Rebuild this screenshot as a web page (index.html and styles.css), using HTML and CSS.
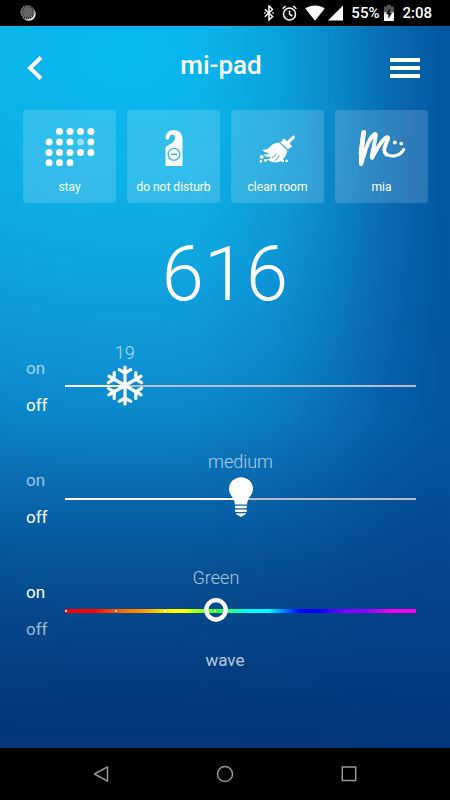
FILE: index.html
```html
<!DOCTYPE html>
<html lang="en">
<head>
<meta charset="utf-8">
<meta name="viewport" content="width=device-width, initial-scale=1">
<title>mi-pad</title>
<link rel="stylesheet" href="styles.css">
</head>
<body>
<div class="statusbar">
  <svg class="sync" width="16" height="16" viewBox="0 0 16 16"><circle cx="8.700" cy="8.700" r="7" fill="#fff"/><circle cx="7.400" cy="7.300" r="7.200" fill="#222"/><circle cx="7.400" cy="7.300" r="6.200" fill="none" stroke="#aaa" stroke-width="1.600" stroke-dasharray="1 1.200"/><circle cx="7.400" cy="7.300" r="5.300" fill="#666"/></svg>
  <svg width="10" height="16" viewBox="0 0 10 16" fill="none" stroke="#fff" stroke-width="1.500"><path d="M.8 4.300 8.600 11.500 5 15V1l3.600 3.500L.8 11.700"/><path d="M.2 8h1.500M8.300 8h1.500" stroke-width="1.700"/></svg>
  <svg width="15" height="16" viewBox="0 0 15 16" fill="none" stroke="#fff" stroke-width="1.500"><circle cx="7.500" cy="9" r="6"/><path d="M7.500 5.500V9.300l2.800 1.700M.6 3.700 3.800 1M14.400 3.700 11.200 1"/></svg>
  <span class="signals">
    <svg width="20" height="16" viewBox="0 0 20 16"><path d="M10 15.700.3 3.600C6-.7 14-.7 19.700 3.600z" fill="#fff"/></svg>
    <svg width="15" height="16" viewBox="0 0 15 16"><path d="M15 .5V15.500H0z" fill="#fff"/></svg>
  </span>
  <span class="battery">55%
    <svg width="10" height="16" viewBox="0 0 10 16"><path d="M3 0h4v1.500h3V16H0V1.500h3z" fill="#555"/><path d="M0 7.500h10V16H0z" fill="#fff"/><path d="M5.700 3.300 2 9.300h2.400v4.500L8 7.700H5.700z" fill="#000"/></svg>
  </span>
  <time>2:08</time>
</div>

<main class="app">
  <header class="header">
    <button class="back" aria-label="Back"><svg width="16" height="24" viewBox="0 0 16 24"><path d="M14 1.500 3 12l11 10.500" fill="none" stroke="#fff" stroke-width="4"/></svg></button>
    <h1>mi-pad</h1>
    <button class="menu" aria-label="Menu"><svg width="30" height="20" viewBox="0 0 30 20"><path d="M0 0h30v4H0zM0 8h30v4H0zM0 16h30v4H0z" fill="#fff"/></svg></button>
  </header>

  <nav class="tiles">
    <button class="tile">
      <svg width="50" height="40" viewBox="0 0 50 40" fill="#fff"><circle cx="14.500" cy="4.500" r="3.500"/><circle cx="25" cy="4.500" r="3.500"/><circle cx="35.500" cy="4.500" r="3.500"/><circle cx="45.900" cy="4.500" r="3.500"/><circle cx="4.100" cy="15" r="3.500"/><circle cx="14.500" cy="15" r="3.500"/><circle cx="25" cy="15" r="3.500"/><circle cx="35.500" cy="15" r="3.500" opacity=".5"/><circle cx="45.900" cy="15" r="3.500"/><circle cx="4.100" cy="25.400" r="3.500"/><circle cx="14.500" cy="25.400" r="3.500"/><circle cx="25" cy="25.400" r="3.500"/><circle cx="35.500" cy="25.400" r="3.500"/><circle cx="45.900" cy="25.400" r="3.500"/><circle cx="4.100" cy="35.800" r="3.500"/><circle cx="14.500" cy="35.800" r="3.500"/><circle cx="25" cy="35.800" r="3.500"/></svg>
      <span>stay</span>
    </button>
    <button class="tile">
      <svg width="50" height="40" viewBox="0 0 50 40"><path d="M16.500 39V21.500C16.500 17.500 26 17 26 10.700 26 6.600 20.600 6.500 20.300 10.800A1.900 1.900 0 0 1 16.500 10.800C16.500 6.300 20 2.900 24.700 2.900 30 2.900 33.500 6.500 33.500 11.700V39z" fill="#fff"/><g fill="none" stroke="#2ab5ea" stroke-width="1.300"><circle cx="25" cy="27.300" r="5.900"/><path d="M22 27.300h6" stroke-width="1.500"/></g></svg>
      <span>do not disturb</span>
    </button>
    <button class="tile">
      <svg width="50" height="40" viewBox="0 0 50 40" fill="#fff"><path d="M39.500 8.900 34 14.300l-2.500-2.300c-1.300-.9-2.300.1-1.800 1.600l-2.500 1.600 8 7.400 1.700-2c1.600.5 2.700-.6 1.600-2l-2.100-2.200 5.300-5.300c1.300-1.500-.7-3.500-2.200-2.200z"/><path d="M26.200 15.800 34.400 23.500C33.500 28 31 33.500 24.500 35.200 20.500 35.900 17 34.500 13.800 32.300 16.500 32 17.800 31 18.500 30 14.500 30.900 11.700 29.300 10.700 27.500 13.500 27.800 15.500 27 17 26 13.500 26 10.800 25 9.300 22.800 14.500 23 16 20.500 18.600 18.200 20.500 16.600 22.800 15.600 26.200 15.800z"/><g fill="none" stroke="#2599d6" stroke-width=".9"><path d="M26 28.500c-1 3-3 4.500-4.500 5.300M23.500 26.500c-1 2-2.500 3.300-4.500 4"/></g><circle cx="8.700" cy="30" r="1.900"/><circle cx="8" cy="34.300" r="1.200"/><circle cx="12.500" cy="33.300" r="1.500"/><circle cx="29.500" cy="33.700" r="1.500"/><circle cx="33.700" cy="33.700" r="1.300"/></svg>
      <span>clean room</span>
    </button>
    <button class="tile">
      <svg width="50" height="40" viewBox="0 0 50 40"><g fill="none" stroke="#fff" stroke-linecap="round" stroke-linejoin="round"><path d="M6.800 5.500C5 15 3.300 26 4 37.200 6.500 33 9 13 17.500 7.200 18.800 6.500 19 8 18.600 10L14.700 29.500" stroke-width="3.900"/><path d="M6.700 5.500 4 26" stroke-width="4.800"/><path d="M15 30.500C19 24 24 13 29.500 10.300 32 9.300 31.500 12.500 29.300 16 27 20.500 26.500 25 29.500 27.500" stroke-width="3.900"/><path d="M15 30.500 18 22" stroke-width="4.200"/><path d="M29 27C35.500 31 43.500 28.500 46.700 22.500" stroke-width="3"/></g><circle cx="37.800" cy="15.500" r="2" fill="#fff"/><circle cx="44.200" cy="16.600" r="1.900" fill="#fff"/></svg>
      <span>mia</span>
    </button>
  </nav>

  <p class="room">616</p>

  <section class="controls">
    <div class="control temperature">
      <div class="switch"><button>on</button><button class="active">off</button></div>
      <div class="slider">
        <output for="temp">19</output>
        <input id="temp" type="range" min="16" max="34" value="19" aria-label="Temperature">
        <svg class="thumb" width="44" height="44" viewBox="0 0 44 44"><defs><path id="arm" d="M22 20.500V2M22 8 16.200 4.700M22 8 27.800 4.700"/></defs><g fill="none" stroke="#fff" stroke-width="3.200" stroke-linecap="round"><use href="#arm"/><use href="#arm" transform="rotate(60 22 20.500)"/><use href="#arm" transform="rotate(120 22 20.500)"/><use href="#arm" transform="rotate(180 22 20.500)"/><use href="#arm" transform="rotate(240 22 20.500)"/><use href="#arm" transform="rotate(300 22 20.500)"/></g></svg>
      </div>
    </div>
    <div class="control brightness">
      <div class="switch"><button>on</button><button class="active">off</button></div>
      <div class="slider">
        <output for="light">medium</output>
        <input id="light" type="range" min="0" max="2" value="1" aria-label="Light">
        <svg class="thumb" width="44" height="44" viewBox="0 0 44 44" fill="#fff"><path d="M22 .3C28.700.3 34 5.300 34 11.800 34 19 28.300 20 28.100 27.500H15.900C15.700 20 10 19 10 11.800 10 5.300 15.300.3 22 .3z"/><rect x="16" y="28.700" width="12" height="2.600" rx="1.200"/><rect x="16" y="32.500" width="12" height="2.600" rx="1.200"/><path d="M17 36.200h10c-.3 1.500-1.800 1.600-2.600 2.400-1.200 1.500-3.600 1.500-4.800 0-.8-.8-2.300-.9-2.600-2.400z"/></svg>
      </div>
    </div>
    <div class="control colour">
      <div class="switch"><button class="active">on</button><button>off</button></div>
      <div class="slider">
        <output for="hue">Green</output>
        <input id="hue" type="range" min="0" max="7" value="3" aria-label="Colour">
        <div class="stops"><i></i><i></i><i></i><i></i></div>
        <svg class="thumb" width="44" height="44" viewBox="0 0 44 44"><circle cx="22" cy="20.800" r="9.700" fill="none" stroke="#fff" stroke-width="4.400"/></svg>
      </div>
    </div>
  </section>
  <button class="wave">wave</button>
</main>

<nav class="navbar">
  <button aria-label="Back"><svg width="18" height="18" viewBox="0 0 18 18"><path d="M15.500 1.800v14.400L2.500 9z"/></svg></button>
  <button aria-label="Home"><svg width="18" height="18" viewBox="0 0 18 18"><circle cx="9" cy="9" r="7.500"/></svg></button>
  <button aria-label="Recents"><svg width="18" height="18" viewBox="0 0 18 18"><rect x="2.300" y="2" width="13.400" height="13.400"/></svg></button>
</nav>
</body>
</html>
```
FILE: styles.css
```css
* { box-sizing: border-box; }

body {
  margin: 0;
  min-height: 100vh;
  display: flex;
  flex-direction: column;
  background: #000;
  color: #fff;
  font-family: Roboto, sans-serif;
}

button {
  margin: 0;
  padding: 0;
  border: 0;
  background: none;
  color: inherit;
  font: inherit;
}

svg { display: block; }

.statusbar {
  height: 26px;
  display: flex;
  align-items: center;
  gap: 8px;
  padding: 0 18px 0 20px;
  font-size: 15px;
  font-weight: 500;
  line-height: 24px;
}
.sync { margin-right: auto; }
.signals { display: flex; gap: 3px; }
.battery { display: flex; align-items: center; gap: 5px; }

.app {
  flex: 1;
  display: flex;
  flex-direction: column;
  background:
    linear-gradient(180deg, rgba(3, 48, 115, 0) 55%, rgba(3, 48, 115, .85) 100%),
    radial-gradient(100% 250% at 0% 20%,
      rgba(4, 84, 160, 0) 44%, rgba(4, 84, 160, .16) 62%, rgba(4, 84, 160, .38) 74%,
      rgba(4, 84, 160, .7) 86%, rgba(4, 84, 160, .94) 98%),
    radial-gradient(220% 100% at 28% 4%,
      #06b8ef 0%, #0ab3ea 14%, #0fa5e0 29%, #0d93d5 43%, #0b83c8 52%,
      #0971b7 64%, #0664a6 74%, #05599b 86%, #044a8c 100%);
}

.header {
  height: 84px;
  display: flex;
  align-items: center;
  justify-content: space-between;
  padding: 0 30px 0 27px;
}
.header h1 {
  margin: 0;
  padding-bottom: 6px;
  font-size: 26px;
  font-weight: 500;
  line-height: 32px;
}
.back { width: 25px; }

.tiles {
  display: grid;
  grid-template-columns: repeat(4, 1fr);
  gap: 11px;
  padding: 0 22px 0 23px;
}
.tile {
  height: 93px;
  display: flex;
  flex-direction: column;
  align-items: center;
  gap: 11px;
  padding-top: 17px;
  border-radius: 3px;
  background: rgba(255, 255, 255, .16);
  font-size: 12px;
  line-height: 18px;
}

.room {
  margin: 27px 0 32px;
  font-size: 76px;
  font-weight: 300;
  line-height: 88px;
  text-align: center;
}

.controls {
  display: flex;
  flex-direction: column;
  gap: 38px;
  padding: 0 34px 0 26px;
}
.control {
  display: grid;
  grid-template-columns: 39px 1fr;
  align-items: center;
}
.switch { display: flex; flex-direction: column; }
.switch button {
  text-align: left;
  font-size: 17px;
  line-height: 37px;
  opacity: .6;
}
.switch .active { opacity: 1; }

.temperature { --pos: 17%; }
.brightness { --pos: 50%; }
.colour { --pos: 43%; }

.slider { position: relative; height: 44px; }
.slider output {
  position: absolute;
  left: var(--pos);
  bottom: 44px;
  transform: translateX(-50%);
  font-size: 18px;
  font-weight: 300;
  line-height: 24px;
  opacity: .65;
}
.slider input {
  -webkit-appearance: none;
  appearance: none;
  display: block;
  width: 100%;
  height: 44px;
  margin: 0;
  background: linear-gradient(90deg, #fff var(--pos), #b9bcc4 var(--pos)) center / 100% 2px no-repeat;
}
.slider input::-webkit-slider-thumb {
  -webkit-appearance: none;
  width: 42px;
  height: 42px;
  opacity: 0;
}
.temperature .slider input { height: 42px; }
.colour .slider input {
  background: linear-gradient(90deg, #f00 8%, #ff7000 17%, #ff8c00 21%, #ff0 31%, #ff0 34%,
    #3f3 43%, #0ff 53%, #0ff 58%, #00f 67%, #00f 72%, #80f 80%, #80f 85%, #f0e 93%) center / 100% 4px no-repeat;
}
.thumb {
  position: absolute;
  top: 0;
  left: var(--pos);
  transform: translateX(-50%);
  pointer-events: none;
}
.brightness output { bottom: 47px; }
.colour output { bottom: 43px; }

.stops {
  position: absolute;
  top: 21px;
  left: 0;
  width: 43%;
  display: flex;
  justify-content: space-between;
  pointer-events: none;
}
.stops i { width: 2px; height: 2px; border-radius: 1px; background: #fff; }

.wave {
  align-self: center;
  font-size: 17px;
  line-height: 24px;
  opacity: .7;
}

.navbar {
  height: 52px;
  display: flex;
  justify-content: center;
  align-items: center;
  gap: 106px;
}
.navbar svg { fill: none; stroke: #999; stroke-width: 1.5; stroke-linejoin: round; }
```
